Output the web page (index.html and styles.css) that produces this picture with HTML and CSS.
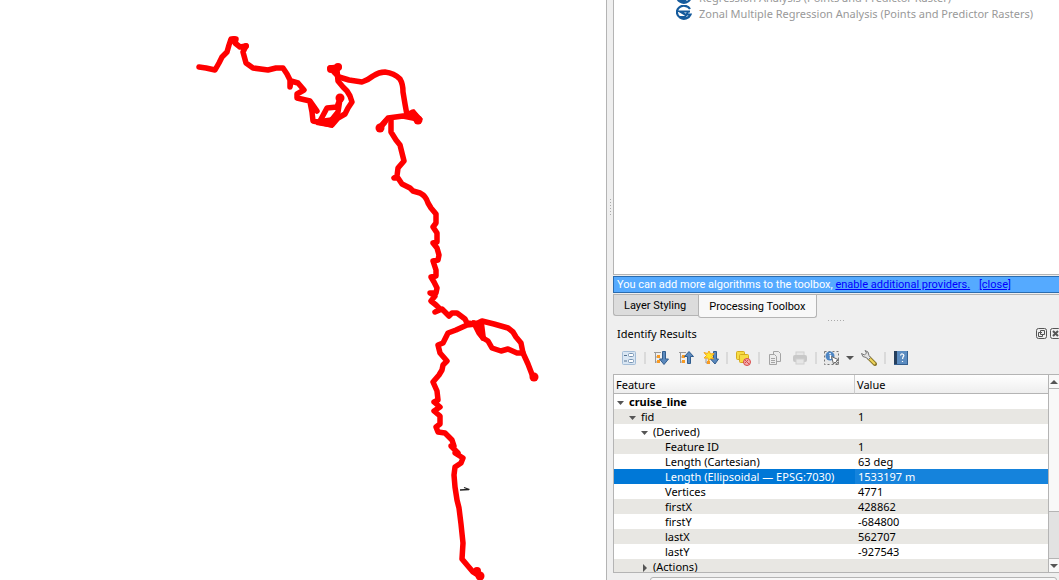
FILE: index.html
```html
<!DOCTYPE html>
<html lang="en">
<head>
<meta charset="utf-8">
<title>Identify Results</title>
<link rel="stylesheet" href="styles.css">
</head>
<body>
<div class="app">
  <main class="map">
    <svg class="map-canvas" viewBox="0 0 606 580" preserveAspectRatio="xMinYMin slice" role="img" aria-label="cruise_line">
      <g class="track">
        <path d="M199 67L206 68L215 70L219 63L222 57L227 52L229 45L231 39L236 39L235 43L240 47L246 46L243 52L246 63L253 68L268 70L276 68L283 68L287 74L290 80L290 87L291 81L298 83L304 90L297 94L297 98L310 101L317 111L310 102L312 112L313 121L323 123L332 125L338 118L345 114L348 108L352 102L350 96L347 91L343 87L338 81L337 70"/>
        <path d="M320 121L327 108L337 107L340 99L338 112L330 122"/>
        <path d="M330 68L339 67L334 72L339 77L349 80L362 82Q368 80 373 76Q379 72 385 72Q394 73 400 79Q403 84 403 92L405 104L407 115L413 112L418 119L403 116L388 118L380 127"/>
        <path d="M391 118L391 132L396 140L400 145L402 153L404 161L398 168L397 176L394 178L398 178L402 184L410 188L413 191L420 193Q426 196 428 203L431 208L436 214L436 223L433 227L437 233L437 242L433 243L437 248L439 255L438 260L433 261L436 270L436 276L431 277L434 282L437 288L436 293L430 293L435 296L431 301L436 305L440 309L435 312L442 309L449 316L452 313L457 313L465 319L467 323L476 324L482 321L494 324L508 328L513 332L516 337L521 343L523 353L528 364L533 377"/>
        <path d="M474 323L479 333L483 338L488 341L492 348L501 351L508 349L517 353L523 353"/>
        <path d="M480 324L481 333L483 338"/>
        <path d="M476 324L467 325L456 330L448 333L443 343L438 345L440 353L447 361L443 365L442 370L439 375L433 382L437 391L438 400L434 402L440 407L434 411L440 416L440 424L436 427L438 432L445 433L452 440L454 446L451 446L458 453L455 453L463 458L461 463L455 467L454 475L455 487L457 500L459 508L461 524L463 543L462 559L473 572L481 577"/>
      </g>
      <g class="stop">
        <circle cx="340" cy="98" r="4.500"/><circle cx="331" cy="69" r="4"/><circle cx="338" cy="67" r="4"/>
        <circle cx="380" cy="128" r="4.500"/><circle cx="418" cy="120" r="4.500"/><circle cx="534" cy="377" r="4.500"/>
        <circle cx="477" cy="571" r="4"/><circle cx="480" cy="576" r="4.500"/><circle cx="234" cy="39" r="3"/><circle cx="246" cy="46" r="3"/>
        <path d="M318 119L333 117L333 128L316 125ZM384 119L390 117L387 124L380 132L376 128ZM408 116L414 109L423 119L418 124ZM472 320L484 322L486 338L482 341L476 332Z"/>
      </g>
      <path class="map-label" d="M460 490L469 489.500M469.500 489.500L464 487.500"/>
    </svg>
  </main>
  <div class="splitter"><span class="grip-v"></span></div>
  <aside class="dock">
    <section class="toolbox">
      <ul class="algorithms">
        <li><svg class="saga" viewBox="0 0 16 16"><use href="#saga"/></svg>Regression Analysis (Points and Predictor Raster)</li>
        <li><svg class="saga" viewBox="0 0 16 16"><g id="saga"><path d="M14 4A7 6.500 0 1 0 14.500 9.500H9L4 6.500H14" fill="none" stroke="#145a9c" stroke-width="2.200"/><path d="M4 12H9L12 7" fill="none" stroke="#145a9c" stroke-width="2"/></g></svg>Zonal Multiple Regression Analysis (Points and Predictor Rasters)</li>
      </ul>
    </section>
    <div class="notice"><p>You can add more algorithms to the toolbox, <a href="#providers">enable additional providers.</a> <a class="close-link" href="#close">[close]</a></p></div>
    <nav class="tabs">
      <button class="tab" type="button">Layer Styling</button>
      <button class="tab active" type="button">Processing Toolbox</button>
    </nav>
    <div class="grip-row"><span class="grip-h"></span></div>
    <header class="title">
      <h2>Identify Results</h2>
      <button type="button" aria-label="Float"><svg viewBox="0 0 11 11"><rect x=".5" y=".5" width="10" height="10" rx="2"/><path d="M4.500 2.500H8.500V6.500H4.500ZM6 4.500H2.500V8.500H6.500V6"/></svg></button>
      <button type="button" aria-label="Close"><svg viewBox="0 0 11 11"><rect x=".5" y=".5" width="10" height="10" rx="2"/><path d="M3 3L8 8M8 3L3 8" stroke-width="2"/></svg></button>
    </header>
    <div class="toolbar">
      <button type="button" aria-label="View tree"><svg viewBox="0 0 16 16"><rect x="1.500" y="1.500" width="13" height="13" rx="1" fill="#d9e6f3" stroke="#a4bdd7"/><path d="M3 5.500H6M3 11H6" stroke="#56728f"/><rect x="7.500" y="3.500" width="5" height="3" rx="1" fill="#fff" stroke="#7895b4"/><rect x="7.500" y="9.500" width="5" height="3" rx="1" fill="#fff" stroke="#7895b4"/></svg></button>
      <i class="sep"></i>
      <button type="button" aria-label="Expand tree"><svg viewBox="0 0 16 16"><path d="M1 2.500H8M2.500 2V13M2 7H5M2 12H5" stroke="#999" fill="none"/><rect x="4" y="5" width="3" height="3" fill="#f89a22"/><rect x="4" y="10" width="3" height="3" fill="#f89a22"/><path d="M9.500 1.500H12.500V9H15.500L11 14.500L6.500 9H9.500Z" fill="#5b89bd" stroke="#315d8f"/></svg></button>
      <button type="button" aria-label="Collapse tree"><svg viewBox="0 0 16 16"><path d="M1 2.500H8M2.500 2V13M2 7H5M2 12H5" stroke="#999" fill="none"/><rect x="4" y="5" width="3" height="3" fill="#f89a22"/><rect x="4" y="10" width="3" height="3" fill="#f89a22"/><path d="M9.500 13.500H12.500V6.500H15.500L11 1.500L6.500 6.500H9.500Z" fill="#5b89bd" stroke="#315d8f"/></svg></button>
      <button type="button" aria-label="Expand new results"><svg viewBox="0 0 16 16"><path d="M3 8V13H5" stroke="#999" fill="none"/><rect x="4" y="11" width="3" height="3" fill="#f89a22"/><path d="M10.500 1.500H13.500V9H15.500L12 14L7.500 9H10.500Z" fill="#5b89bd" stroke="#315d8f"/><path d="M6 1L7.500 4L11 3.500L9 6.500L10.500 9L7.500 8.500L5.500 11L5 8L1 8L3.500 5.500L1 2.500L4.500 3.500Z" fill="#ffe329" stroke="#f3a51b"/></svg></button>
      <i class="sep"></i>
      <button type="button" aria-label="Clear results"><svg viewBox="0 0 16 16"><rect x="1.500" y="1.500" width="8" height="8" rx="1" fill="#f6dc44" stroke="#d6ac1e"/><rect x="4.500" y="4.500" width="9" height="8" rx="1" fill="#f6dc44" stroke="#d6ac1e"/><circle cx="12" cy="12" r="3.500" fill="#f3aaaa" stroke="#d84b4b"/><path d="M9.500 9.500L14.500 14.500M10 13L13 10" stroke="#d84b4b"/></svg></button>
      <i class="sep"></i>
      <button type="button" aria-label="Copy feature" disabled><svg viewBox="0 0 16 16" fill="#ececec" stroke="#a4a4a4"><path d="M6.500 1.500H11.500L13.500 3.500V11.500H6.500Z"/><path d="M2.500 4.500H7.500L9.500 6.500V14.500H2.500Z"/><path d="M4 8.500H8M4 10.500H8M4 12.500H8"/></svg></button>
      <button type="button" aria-label="Print" disabled><svg viewBox="0 0 16 16"><rect x="4" y="2" width="8" height="4" fill="#e6e6e6" stroke="#d0d0d0"/><rect x="1" y="5" width="14" height="7" rx="2" fill="#c8c8c8"/><rect x="4" y="9" width="8" height="5" fill="#e6e6e6" stroke="#d0d0d0"/></svg></button>
      <i class="sep"></i>
      <button class="menu" type="button" aria-label="Identify features"><svg viewBox="0 0 16 16"><rect x=".5" y="1.500" width="14" height="13" fill="#e8e8e8" stroke="#777" stroke-dasharray="2 2"/><circle cx="6" cy="6" r="4.500" fill="#4e86c4"/><path d="M6 3V4M5.500 5.500H6.500V9" stroke="#fff" stroke-width="1.500"/><path d="M7.500 6.500L15 10L12 11L14.500 14L13.500 15L11 12L9.500 14Z" fill="#fff" stroke="#666"/></svg><span class="arrow"></span></button>
      <button type="button" aria-label="Identify settings"><svg viewBox="0 0 16 16"><path d="M8 8L14 14" stroke="#8c792e" stroke-width="4" stroke-linecap="round"/><path d="M8 8L14 14" stroke="#f0d65c" stroke-width="2"/><path d="M4 .5L5.500 3L3.500 5L.5 3.500Q1 7.500 5 7.500L7.500 9.500L9.500 7.500L8 5.500Q8 1 4 .5Z" fill="#e2e2e2" stroke="#777"/></svg></button>
      <i class="sep"></i>
      <button type="button" aria-label="Help"><svg viewBox="0 0 16 16"><rect x="1" y="1" width="14" height="14" fill="#5b8cc1"/><rect x="1" y="1" width="3" height="14" fill="#263f5d"/><path d="M1 14.500H15M14.500 1V15" stroke="#345f8f"/><path d="M7.500 5.500Q8 3.500 9.500 4Q12 5 10 7L9.500 9M9.500 11V12" fill="none" stroke="#fff" stroke-width="1.200"/></svg></button>
    </div>
    <section class="results">
      <div class="table-view">
        <table>
          <thead><tr><th scope="col">Feature</th><th scope="col">Value</th></tr></thead>
          <tbody>
            <tr><td class="l0 bold"><span class="open"></span>cruise_line</td><td></td></tr>
            <tr><td class="l1"><span class="open"></span>fid</td><td>1</td></tr>
            <tr><td class="l2"><span class="open"></span>(Derived)</td><td></td></tr>
            <tr><td class="l3">Feature ID</td><td>1</td></tr>
            <tr><td class="l3">Length (Cartesian)</td><td>63 deg</td></tr>
            <tr class="selected"><td class="l3">Length (Ellipsoidal — EPSG:7030)</td><td>1533197 m</td></tr>
            <tr><td class="l3">Vertices</td><td>4771</td></tr>
            <tr><td class="l3">firstX</td><td>428862</td></tr>
            <tr><td class="l3">firstY</td><td>-684800</td></tr>
            <tr><td class="l3">lastX</td><td>562707</td></tr>
            <tr><td class="l3">lastY</td><td>-927543</td></tr>
            <tr><td class="l2"><span class="shut"></span>(Actions)</td><td></td></tr>
          </tbody>
        </table>
      </div>
      <div class="scrollbar">
        <button type="button" aria-label="Scroll up"><span class="arrow up"></span></button>
        <div class="scroll-track"><div class="thumb"></div></div>
        <button type="button" aria-label="Scroll down"><span class="arrow"></span></button>
      </div>
    </section>
    <footer class="footer"><div class="mode-box"></div></footer>
  </aside>
</div>
</body>
</html>
```
FILE: styles.css
```css
* { box-sizing: border-box; }
body {
  margin: 0;
  overflow: hidden;
  font: 11px/15px "Noto Sans", "Open Sans", sans-serif;
  color: #000;
  background: #fff;
}
button { font: inherit; color: inherit; border: 0; padding: 0; background: none; }
svg { display: block; }
.app {
  display: grid;
  grid-template-columns: minmax(0, 606fr) 7px minmax(0, 446fr);
  grid-template-rows: minmax(0, 1fr);
  height: 100vh;
}
.map { overflow: hidden; background: #fff; }
.map-canvas { width: 100%; height: 100%; }
.track { fill: none; stroke: #f00; stroke-width: 5.5; stroke-linejoin: round; stroke-linecap: round; }
.stop { fill: #f00; }
.map-label { fill: none; stroke: #222; stroke-width: 1.3; }
.splitter {
  display: flex;
  align-items: center;
  justify-content: center;
  background: #efefef;
  border-left: 1px solid #b4b4b4;
  padding-bottom: 166px;
}
.grip-v { width: 1px; height: 17px; background: repeating-linear-gradient(#aaa 0 1px, transparent 1px 3px); }
.dock { display: flex; flex-direction: column; min-height: 0; background: #efefef; }
.toolbox {
  flex: 1;
  min-height: 0;
  display: flex;
  overflow: hidden;
  background: #fff;
  border: 1px solid #b4b4b4;
  border-width: 0 0 1px 1px;
}
.algorithms { list-style: none; margin: -11px 0 0; padding: 0 0 0 62px; color: #999; }
.algorithms li { display: flex; align-items: center; gap: 7px; height: 16px; white-space: nowrap; }
.saga { width: 16px; height: 16px; flex: none; }
.notice {
  padding: 1px 0;
  border-bottom: 1px solid #b4b4b4;
  font-family: Roboto, "Noto Sans", sans-serif;
}
.notice p {
  margin: 0;
  padding: 0 3px;
  border: 1px solid #2b6cae;
  border-right: 0;
  background: #55aaff;
  color: #fff;
  white-space: nowrap;
}
.notice a { color: #00f; }
.close-link { margin-left: 6px; }
.tabs { display: flex; align-items: flex-start; font-family: Roboto, "Noto Sans", sans-serif; }
.tab {
  height: 21px;
  padding: 0 12px 0 10px;
  background: #dcdcdc;
  border: 1px solid #b4b4b4;
  border-top: 0;
  border-right: 0;
  border-radius: 0 0 0 3px;
}
.tab.active { height: 23px; padding: 0 11px 0 10px; background: #f8f8f8; border-right: 1px solid #b4b4b4; border-radius: 0 0 3px 3px; }
.grip-row { display: flex; justify-content: center; height: 6px; padding-top: 2px; }
.grip-h { width: 17px; height: 1px; background: repeating-linear-gradient(90deg, #aaa 0 1px, transparent 1px 3px); }
.title { display: flex; align-items: center; gap: 3px; height: 18px; margin-right: -2px; padding-left: 4px; }
.title h2 { flex: 1; margin: 0; font-size: 11px; font-weight: 400; }
.title svg { width: 11px; height: 11px; fill: none; stroke: #555; }
.toolbar { display: flex; align-items: center; gap: 9px; height: 32px; padding: 0 8px; }
.toolbar svg { width: 16px; height: 16px; }
.menu { display: flex; align-items: center; gap: 6px; margin-right: -2px; }
.sep { width: 2px; height: 12px; margin: 0 -2px; background: #dadada; }
.arrow { display: block; border: 4px solid transparent; border-top-color: #555; border-bottom: 0; }
.arrow.up { border-bottom: 4px solid #555; border-top: 0; }
.results { display: flex; height: 199px; border: 1px solid #b4b4b4; border-right: 0; background: #fff; }
.table-view { flex: 1; min-width: 0; overflow: hidden; background: #e8e7e3; }
table { width: 100%; table-layout: fixed; border-collapse: separate; border-spacing: 0; }
th {
  height: 19px;
  padding: 0 2px;
  text-align: left;
  font-weight: 400;
  background: linear-gradient(#fff, #eee);
  border-bottom: 1px solid #b4b4b4;
}
th:first-child { width: 241px; border-right: 1px solid #ccc; }
td { height: 15px; padding: 0 3px; white-space: nowrap; background: #fff; }
tr:nth-child(even) td { background: #e8e7e3; }
tr.selected td { background: #0078d7; color: #fff; }
tr.selected td + td { background: #1583dc; }
.l0 { padding-left: 3px; }
.l1 { padding-left: 15px; }
.l2 { padding-left: 27px; }
.l3 { padding-left: 51px; }
.bold { font-weight: 700; }
.open, .shut { display: inline-block; width: 7px; height: 4px; margin-right: 5px; vertical-align: middle; background: #555; clip-path: polygon(0 0, 100% 0, 50% 100%); }
.shut { width: 4px; height: 8px; margin: 0 6px 0 2px; clip-path: polygon(0 0, 100% 50%, 0 100%); }
.scrollbar { display: flex; flex-direction: column; width: 11px; overflow: hidden; border-left: 1px solid #b4b4b4; }
.scrollbar button { display: flex; justify-content: center; align-items: center; height: 13px; background: #f8f8f8; }
.scroll-track { flex: 1; background: #e2e2e2; border-bottom: 1px solid #b4b4b4; }
.thumb { height: 73%; background: #f8f8f8; border: 1px solid #b4b4b4; border-width: 1px 0; }
.footer { height: 7px; padding: 4px 2px 0 37px; overflow: hidden; }
.mode-box { height: 22px; border: 1px solid #b4b4b4; border-radius: 3px; background: #f8f8f8; }
```
